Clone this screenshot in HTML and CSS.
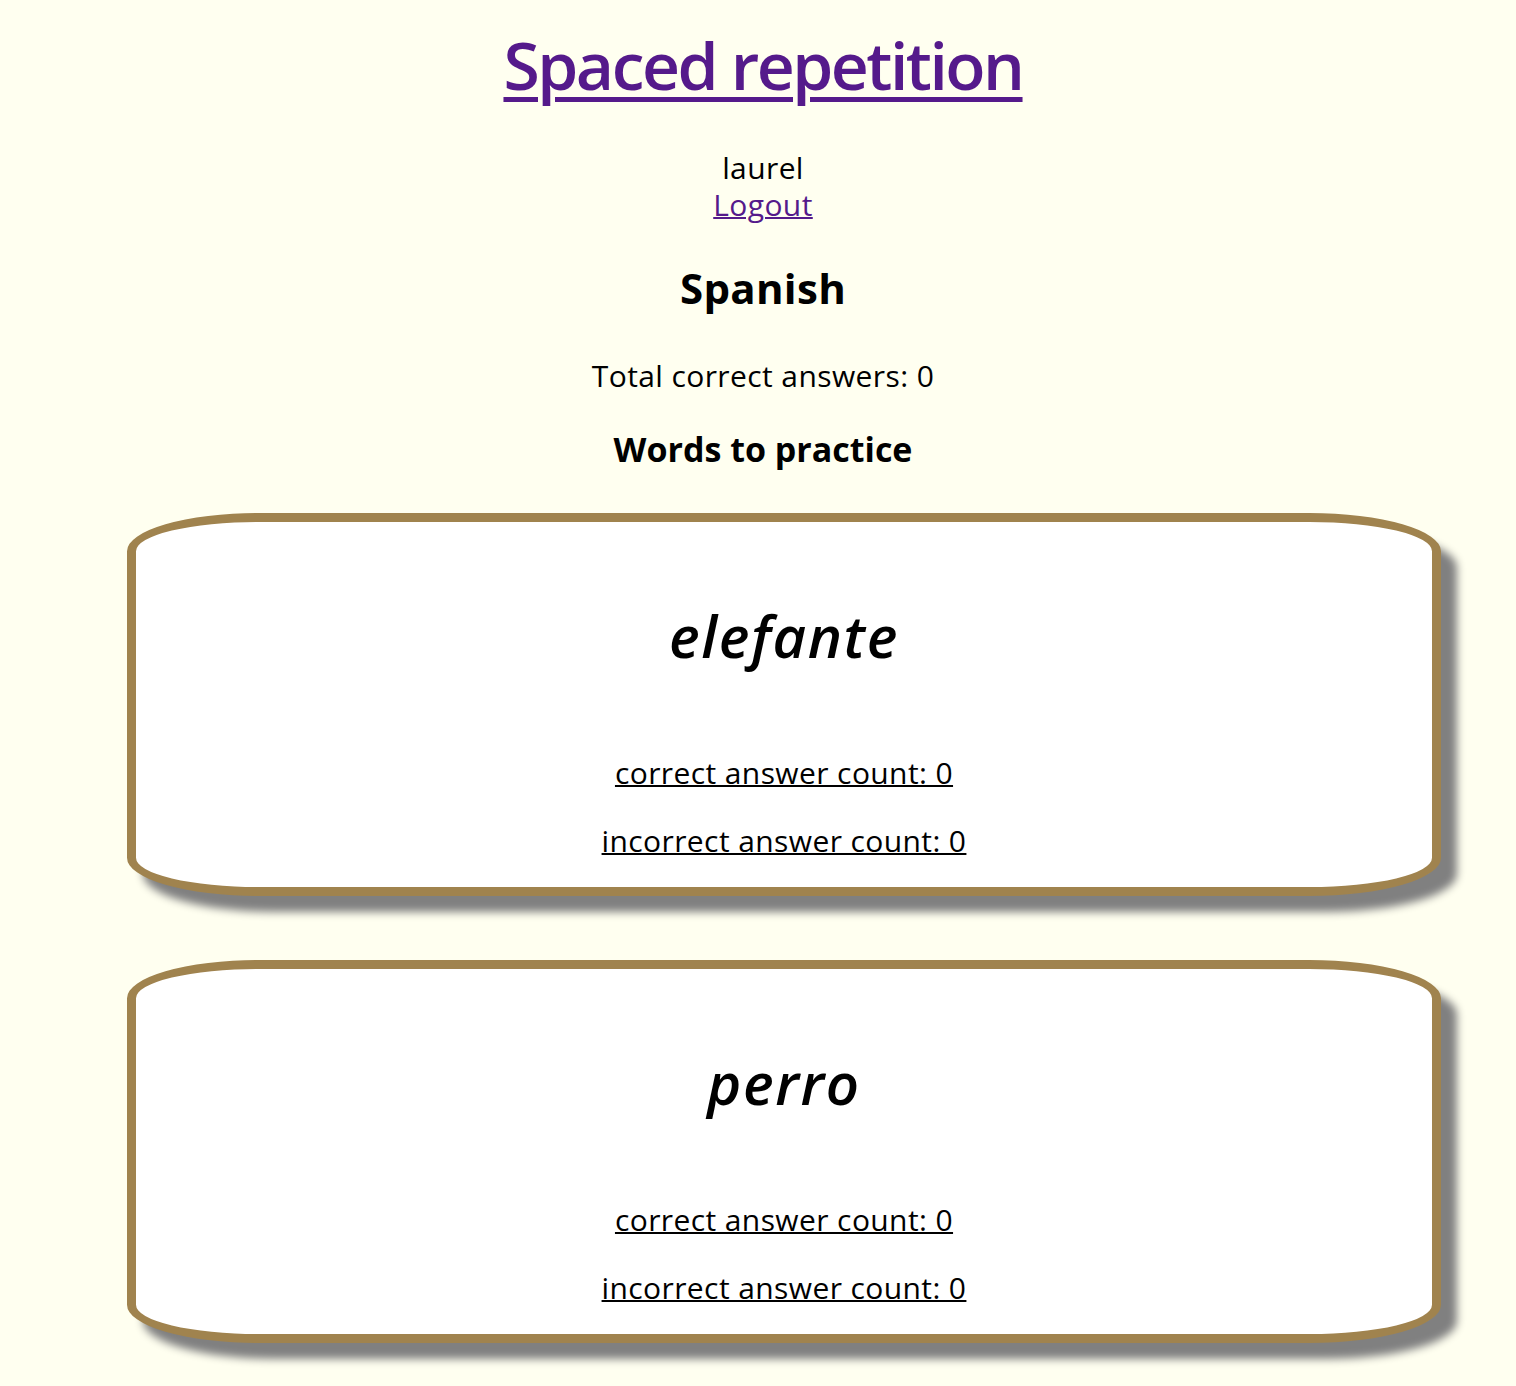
FILE: index.html
```html
<!DOCTYPE html>
<html lang="en">
<head>
<meta charset="utf-8">
<title>Spaced repetition</title>
<link rel="stylesheet" href="styles.css">
</head>
<body>
<header class="header">
  <h1 class="title"><a href="#" class="title-link">Spaced repetition</a></h1>
  <div class="user">
    <div class="username">laurel</div>
    <a href="#" class="logout">Logout</a>
  </div>
  <h2 class="language">Spanish</h2>
  <p class="total">Total correct answers: 0</p>
  <h3 class="subhead">Words to practice</h3>
</header>
<main class="cards">
  <section class="card">
    <h2 class="word">elefante</h2>
    <p class="count"><span class="count-text">correct answer count: 0</span></p>
    <p class="count"><span class="count-text">incorrect answer count: 0</span></p>
  </section>
  <section class="card">
    <h2 class="word">perro</h2>
    <p class="count"><span class="count-text">correct answer count: 0</span></p>
    <p class="count"><span class="count-text">incorrect answer count: 0</span></p>
  </section>
</main>
</body>
</html>
```
FILE: styles.css
```css
html, body {
  margin: 0;
  padding: 0;
}

body {
  background: #fffff0;
  color: #000;
  font-family: "Open Sans", "Noto Sans", sans-serif;
  font-size: 30px;
  letter-spacing: 0.4px;
}

.header {
  display: flex;
  flex-direction: column;
  align-items: center;
  padding-left: 10px;
  text-align: center;
}

.title {
  margin: 24px 0 0;
  font-size: 66px;
  font-weight: 600;
  letter-spacing: -2.5px;
  line-height: 80px;
}

.title-link,
.logout {
  color: #551a8b;
  text-decoration: underline;
}

.title-link {
  text-decoration-thickness: 5px;
  text-underline-offset: 7px;
}

.user {
  margin-top: 45px;
  line-height: 37px;
}

.username,
.logout {
  display: block;
}

.logout {
  text-decoration-thickness: 2px;
}

.language {
  margin: 40px 0 0;
  font-size: 42px;
  font-weight: 700;
  letter-spacing: 0.3px;
  line-height: 50px;
}

.total {
  margin: 44px 0 0;
  line-height: 37px;
}

.subhead {
  margin: 35px 0 0;
  font-size: 34px;
  font-weight: 700;
  letter-spacing: 0;
  line-height: 40px;
}

.cards {
  display: flex;
  flex-direction: column;
  gap: 64px;
  margin: 44px 75px 40px 127px;
}

.card {
  background: #fff;
  border: 9px solid #a0834e;
  border-radius: 10%;
  box-shadow: 16px 16px 8px #808080;
  padding: 78px 0 28px;
  text-align: center;
}

.word {
  margin: 0;
  font-size: 58px;
  font-style: italic;
  font-weight: 600;
  letter-spacing: 1.6px;
  line-height: 72px;
}

.count {
  margin: 31px 0 0;
  line-height: 37px;
}

.word + .count {
  margin-top: 82px;
}

.count-text {
  text-decoration: underline;
  text-decoration-thickness: 2px;
}
```
